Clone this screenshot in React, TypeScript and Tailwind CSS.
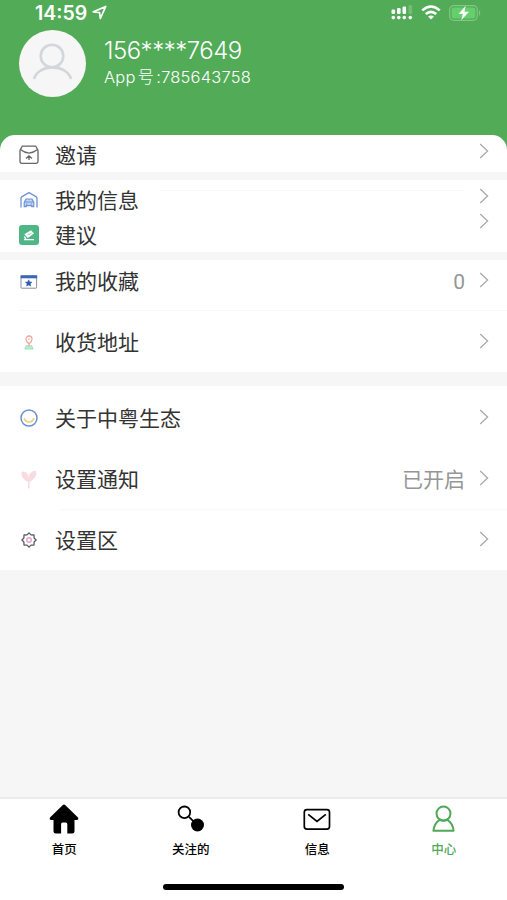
import React from 'react';

const Chevron = ({ className = '' }: { className?: string }) => (
  <svg className={`h-4 w-[10px] shrink-0 ${className}`} viewBox="0 0 10 16" fill="none">
    <path d="M1.2 1 L8.6 8 L1.2 15" stroke="#a9a9a9" strokeWidth="1.3" />
  </svg>
);

const InviteIcon = () => (
  <svg className="h-[20px] w-[20px]" viewBox="0 0 20 20" fill="none" stroke="#666" strokeWidth="1.3">
    <path d="M1 5.2 L3.2 1.2 H16.8 L19 5.2 V16.5 Q19 18.3 17.2 18.3 H2.8 Q1 18.3 1 16.5 Z" strokeLinejoin="round" />
    <path d="M1.4 4.6 Q10 11.5 18.6 4.6" />
    <path d="M10 15 V11 M7 13.4 L10 10.8 L13 13.4" />
  </svg>
);

const GarageIcon = () => (
  <svg className="h-[18px] w-[18px]" viewBox="0 0 18 18" fill="none" stroke="#6f93d8">
    <path d="M1 16.5 V7.3 Q1 6.3 2 5.6 L9 1.6 L16 5.6 Q17 6.3 17 7.3 V16.5" strokeWidth="1.3" strokeLinejoin="round" />
    <path d="M4.2 15.6 V11.4 L6 8 H12 L13.8 11.4 V15.6 H11.8 V14.6 H6.2 V15.6 Z" fill="#c3d3f2" strokeWidth="1.2" />
    <path d="M4.5 11 H13.5 M6 13 H7.4 M10.6 13 H12" strokeWidth="1.2" />
  </svg>
);

const SuggestIcon = () => (
  <svg className="h-[20px] w-[20px]" viewBox="0 0 20 20">
    <rect width="20" height="20" rx="3" fill="#50b686" />
    <path d="M5.3 9.2 L12 5.2 L15 8.6 L8.8 13 Z" fill="#fff" />
    <path d="M5.2 11.6 L7 14 M5 14.6 H15" stroke="#fff" strokeWidth="1.3" />
    <path d="M8.5 10 L10 9 L11 9.4 L12.6 7.8" stroke="#50b686" strokeWidth="0.7" fill="none" />
  </svg>
);

const FavoriteIcon = () => (
  <svg className="h-[14px] w-[18px]" viewBox="0 0 18 14">
    <rect x="1" y="1" width="15.6" height="12.2" rx="0.6" fill="#fff" stroke="#8790a3" />
    <rect x="0.6" y="0.3" width="16.6" height="3" fill="#3d66b5" />
    <path d="M8.7 4.8 L9.7 6.9 L12 7.2 L10.3 8.8 L10.8 11.1 L8.7 10 L6.6 11.1 L7.1 8.8 L5.4 7.2 L7.7 6.9 Z" fill="#2f5bb0" stroke="#2f5bb0" strokeWidth="0.5" />
  </svg>
);

const AddressIcon = () => (
  <svg className="h-[15px] w-[10px]" viewBox="0 0 10 15" fill="none">
    <path d="M2.6 10 L0.8 14 H9.2 L7.4 10" fill="#b9efd2" stroke="#8fe0b5" strokeWidth="0.8" />
    <path d="M5 12 V9 Q2 6.5 2 4 A3 3 0 0 1 8 4 Q8 6.5 5 9" stroke="#eda79b" strokeWidth="1.3" />
    <circle cx="5" cy="4" r="1" fill="#f6cbc3" />
  </svg>
);

const SmileIcon = () => (
  <svg className="h-[18px] w-[18px]" viewBox="0 0 18 18" fill="none">
    <circle cx="9" cy="9" r="8" stroke="#6c8fd3" strokeWidth="1.5" />
    <path d="M4.2 9 C5.2 14.2 12.8 14.2 13.8 9" stroke="#ecd27c" strokeWidth="1.5" />
  </svg>
);

const SproutIcon = () => (
  <svg className="h-[19px] w-[16px]" viewBox="0 0 16 19" fill="#f8dbe0">
    <path d="M7.7 12 C3 10.5 -0.6 6 0.6 2.2 C2 0.2 6.6 2 7.6 6 Z" />
    <path d="M7.9 12 C5.8 6.5 9.5 1 14.3 0.8 C16.8 3 14.5 10 7.9 12 Z" />
    <path d="M7.8 9 V18.5" stroke="#f8dbe0" strokeWidth="1.6" />
  </svg>
);

const GearIcon = () => (
  <svg className="h-4 w-4" viewBox="0 0 16 16" fill="none">
    <path
      d="M8 0.9 L10 2.9 L13 3 L13.1 6 L15.1 8 L13.1 10 L13 13 L10 13.1 L8 15.1 L6 13.1 L3 13 L2.9 10 L0.9 8 L2.9 6 L3 3 L6 2.9 Z"
      stroke="#5c5967"
      strokeWidth="1.3"
      strokeLinejoin="round"
    />
    <circle cx="8" cy="8" r="2.3" stroke="#e3a4cf" strokeWidth="1.4" />
  </svg>
);

interface MenuRowProps {
  icon: React.ReactNode;
  label: string;
  value?: string;
  className: string;
  chevronClass?: string;
}

const MenuRow = ({ icon, label, value, className, chevronClass }: MenuRowProps) => (
  <div className={`flex items-center pr-[18px] pl-[19px] ${className}`}>
    <div className="flex w-5 shrink-0 justify-center">{icon}</div>
    <span className="ml-4 flex-1 pb-[3px] text-[21px] leading-6">{label}</span>
    {value && (
      <span className="mr-[14px] pt-px font-['Roboto','Noto_Sans_CJK_SC',sans-serif] text-[21px] leading-6 text-[#969696]">{value}</span>
    )}
    <Chevron className={chevronClass} />
  </div>
);

const StatusBar = () => (
  <div className="flex h-[25px] items-center justify-between pr-[25px] pl-[35px]">
    <div className="flex items-center gap-[5px]">
      <span className="font-['Inter','Liberation_Sans',sans-serif] text-[19.5px] leading-6 font-semibold">14:59</span>
      <svg className="h-[15px] w-[15px]" viewBox="0 0 14 14" fill="none">
        <path d="M1.2 6.4 L12.8 1.4 L7.8 12.6 L7 7 Z" stroke="#fff" strokeWidth="1.6" strokeLinejoin="round" />
      </svg>
    </div>
    <div className="flex items-center">
      <svg className="h-[15px] w-[22px]" viewBox="0 0 22 15" fill="#fff">
        <rect x="0.5" y="4.5" width="3.6" height="4.5" rx="1.2" />
        <rect x="6" y="3" width="3.6" height="6" rx="1.2" />
        <rect x="11.5" y="1.5" width="3.6" height="7.5" rx="1.2" />
        <rect x="17.5" y="0" width="3.6" height="9" rx="1.2" opacity="0.2" />
        <circle cx="2.3" cy="12.6" r="1.8" />
        <circle cx="7.8" cy="12.6" r="1.8" />
        <circle cx="13.3" cy="12.6" r="1.8" />
        <circle cx="19.3" cy="12.6" r="1.8" />
      </svg>
      <svg className="ml-2 h-[15px] w-5" viewBox="0 0 20 15" fill="none" stroke="#fff" strokeWidth="2.6">
        <path d="M1.2 5.4 Q10 -2.4 18.8 5.4" />
        <path d="M4.8 9 Q10 4.6 15.2 9" />
        <path d="M10 14.6 L7 11.6 Q10 9.4 13 11.6 Z" fill="#fff" stroke="none" />
      </svg>
      <svg className="ml-2 h-4 w-[33px]" viewBox="0 0 33 16" fill="none">
        <rect x="0.7" y="0.7" width="27.6" height="14.6" rx="4.2" stroke="#83c688" strokeWidth="1.2" />
        <rect x="2.6" y="2.6" width="23.8" height="10.8" rx="2.6" fill="#65cf6b" />
        <path d="M30 5 Q32.6 8 30 11 Z" fill="#83c688" />
        <path d="M16.8 0.8 L9.5 8.9 H13.8 L12.2 15.2 L20 6.8 H15.4 Z" fill="#fff" />
      </svg>
    </div>
  </div>
);

const tabs = [
  {
    label: '首页',
    icon: (
      <svg className="h-[30px] w-[30px]" viewBox="0 0 30 30">
        <path
          d="M13.6 1.2 Q15 0 16.4 1.2 L29 13.6 Q30 15.5 28.4 16 H25.5 V27 Q25.5 29.5 23 29.5 H18.3 V20 Q18.3 18.5 16.8 18.5 H13.6 Q12.1 18.5 12.1 20 V29.5 H7 Q4.5 29.5 4.5 27 V16 H1.6 Q0 15.5 1 13.6 Z"
          fill="#000"
        />
      </svg>
    ),
  },
  {
    label: '关注的',
    icon: (
      <svg className="h-[30px] w-[30px]" viewBox="0 0 30 30">
        <path d="M13 12.8 L20 19.8" stroke="#000" strokeWidth="1.8" />
        <circle cx="8.4" cy="8.3" r="5.8" fill="#fff" stroke="#000" strokeWidth="1.8" />
        <circle cx="21.5" cy="21" r="6.5" fill="#000" />
      </svg>
    ),
  },
  {
    label: '信息',
    icon: (
      <svg className="h-[30px] w-[30px]" viewBox="0 0 30 30" fill="none" stroke="#000" strokeWidth="1.7">
        <rect x="2.3" y="5.6" width="25.2" height="19.6" rx="2.6" />
        <path d="M6.2 10.3 L15 17.4 L23.8 10.3" />
      </svg>
    ),
  },
  {
    label: '中心',
    active: true,
    icon: (
      <svg className="h-[30px] w-[30px]" viewBox="0 0 30 30" fill="none" stroke="#4fa957" strokeWidth="2">
        <circle cx="14.5" cy="9.6" r="7" />
        <path d="M10.7 15.8 Q5.2 19.2 4.4 26.8 H24.6 Q23.8 19.2 18.3 15.8" strokeLinejoin="round" />
        <path d="M10.7 15.8 Q14.5 17.8 18.3 15.8" />
      </svg>
    ),
  },
];

function App() {
  return (
    <div className="flex h-[900px] w-full flex-col overflow-hidden bg-[#f6f6f6] font-['Noto_Sans_CJK_SC',sans-serif] text-[#333]">
      {/* Header */}
      <header className="h-[135px] shrink-0 bg-[#52ab57] text-white">
        <StatusBar />
        <div className="flex pt-[5px] pl-[19px]">
          <div className="h-[67px] w-[67px] shrink-0 rounded-full bg-[#f6f6f7]">
            <svg className="h-full w-full" viewBox="0 0 67 67" fill="none" stroke="#d5d6da" strokeWidth="2.6">
              <circle cx="33" cy="26" r="11.3" />
              <path d="M15 49 C19 33.5 48 33.5 52 49" />
            </svg>
          </div>
          <div className="ml-[18px] font-['Inter','Noto_Sans_CJK_SC',sans-serif]">
            <div className="pt-[7px] text-[24px] leading-[28px] font-light tracking-[-0.5px]">156****7649</div>
            <div className="text-[16.5px] leading-[25px] font-light tracking-[0.2px]">
              App<span className="mx-[2px]">号</span>:785643758
            </div>
          </div>
        </div>
      </header>

      {/* Menu groups */}
      <main className="flex-1">
        <div className="bg-[#52ab57]">
          <MenuRow icon={<InviteIcon />} label="邀请" className="h-[37px] rounded-t-[15px] bg-white pt-[3px]" chevronClass="mb-[9px]" />
        </div>

        <section className="mt-2 bg-white">
          <MenuRow
            icon={<GarageIcon />}
            label="我的信息"
            className="h-[38px] bg-[linear-gradient(#f8f8f8,#f8f8f8)] bg-[length:305px_1px] bg-[position:160px_10px] bg-no-repeat pt-[2px]"
            chevronClass="mb-[9px]"
          />
          <MenuRow icon={<SuggestIcon />} label="建议" className="h-[34px]" chevronClass="-mt-[5px] self-start" />
        </section>

        <section className="mt-2 bg-white">
          <MenuRow icon={<FavoriteIcon />} label="我的收藏" value="0" className="h-[50px] pb-[7px]" chevronClass="mb-[3px]" />
          <div className="ml-[20px] h-px bg-[#f7f7f7]" />
          <MenuRow icon={<AddressIcon />} label="收货地址" className="h-[61px] pt-px" chevronClass="mb-[3px]" />
        </section>

        <section className="mt-[14px] bg-white">
          <MenuRow icon={<SmileIcon />} label="关于中粤生态" className="h-[62px] pt-[2px]" chevronClass="mb-[3px]" />
          <MenuRow icon={<SproutIcon />} label="设置通知" value="已开启" className="h-[61px] pt-px" chevronClass="mb-[2px]" />
          <div className="ml-[60px] h-px bg-[#f9f9f9]" />
          <MenuRow icon={<GearIcon />} label="设置区" className="h-[60px]" chevronClass="mb-[3px]" />
        </section>
      </main>

      {/* Tab bar */}
      <nav className="flex h-[103px] shrink-0 flex-col border-t-2 border-[#ebebeb] bg-white">
        <div className="flex pt-[5px] pl-px">
          {tabs.map((tab) => (
            <div key={tab.label} className={`flex flex-1 flex-col items-center ${tab.active ? 'text-[#4fa957]' : 'text-black'}`}>
              {tab.icon}
              <span className="mt-[6px] text-[12.5px] leading-[18px] font-medium">{tab.label}</span>
            </div>
          ))}
        </div>
        <div className="mx-auto mt-auto mb-[10px] h-[6px] w-[181px] rounded-full bg-black" />
      </nav>
    </div>
  );
}

export default App;
